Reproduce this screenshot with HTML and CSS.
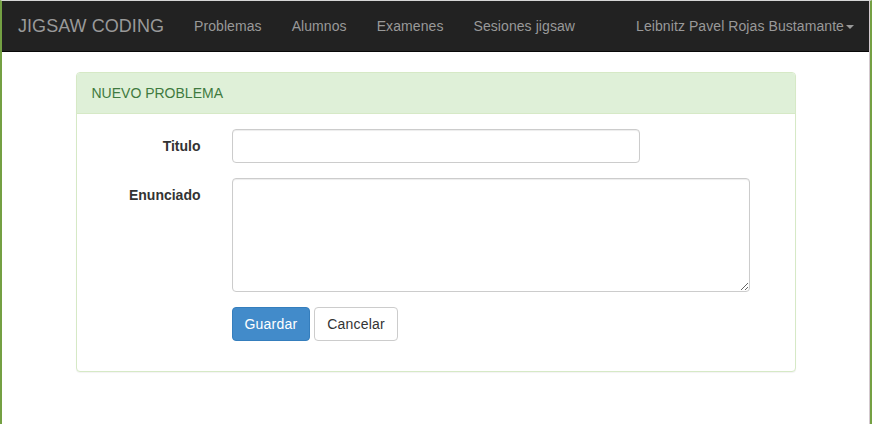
FILE: index.html
```html
<!DOCTYPE html>
<html lang="es">
<head>
<meta charset="utf-8">
<title>Nuevo problema</title>
<link rel="stylesheet" href="styles.css">
</head>
<body>
<div class="frame">
  <nav class="navbar">
    <a class="brand" href="#">JIGSAW CODING</a>
    <ul class="nav">
      <li><a href="#">Problemas</a></li>
      <li><a href="#">Alumnos</a></li>
      <li><a href="#">Examenes</a></li>
      <li><a href="#">Sesiones jigsaw</a></li>
    </ul>
    <ul class="nav nav-right">
      <li><a href="#">Leibnitz Pavel Rojas Bustamante<span class="caret"></span></a></li>
    </ul>
  </nav>
  <main class="main">
    <section class="panel">
      <div class="panel-heading">NUEVO PROBLEMA</div>
      <div class="panel-body">
        <form class="form">
          <label class="label" for="titulo">Titulo</label>
          <div class="field"><input id="titulo" class="input input-short" type="text"></div>
          <label class="label" for="enunciado">Enunciado</label>
          <div class="field"><textarea id="enunciado" class="input textarea" rows="5"></textarea></div>
          <div></div>
          <div class="field actions">
            <button type="button" class="btn btn-primary">Guardar</button>
            <button type="button" class="btn btn-default">Cancelar</button>
          </div>
        </form>
      </div>
    </section>
  </main>
</div>
</body>
</html>
```
FILE: styles.css
```css
* { box-sizing: border-box; }
html, body { margin: 0; padding: 0; }
body {
  font-family: "Liberation Sans", Arial, sans-serif;
  font-size: 14px;
  line-height: 20px;
  color: #333;
  background: #fff;
}
.frame {
  height: 424px;
  border-top: 1px solid #d6d6d6;
  border-left: 2px solid #74a043;
  border-right: 2px solid #74a043;
  box-shadow: inset -1px 0 0 #d3c9cf;
  overflow: hidden;
}
.navbar {
  display: flex;
  align-items: stretch;
  height: 51px;
  margin-right: 1px;
  background: #222;
  border-bottom: 1px solid #080808;
}
.brand {
  padding: 15px 15px 15px 16px;
  font-size: 18px;
  line-height: 20px;
  letter-spacing: 0.05px;
  color: #999;
  text-decoration: none;
}
.nav {
  display: flex;
  list-style: none;
  margin: 0;
  padding: 0;
}
.nav a {
  display: block;
  padding: 15px;
  line-height: 20px;
  letter-spacing: 0.08px;
  color: #999;
  text-decoration: none;
}
.nav-right { margin-left: auto; }
.caret {
  display: inline-block;
  width: 0;
  height: 0;
  margin-left: 2px;
  vertical-align: middle;
  border-top: 4px solid #999;
  border-left: 4px solid transparent;
  border-right: 4px solid transparent;
}
.main {
  display: flex;
  justify-content: center;
  padding-top: 20px;
  padding-right: 1px;
}
.panel {
  width: 720px;
  border: 1px solid #d6e9c6;
  border-radius: 4px;
  background: #fff;
  box-shadow: 0 1px 1px rgba(0,0,0,.05);
}
.panel-heading {
  padding: 10px 15px;
  background: #dff0d8;
  color: #3f7a3f;
  border-bottom: 1px solid #d6e9c6;
  border-radius: 3px 3px 0 0;
}
.panel-body { padding: 15px; }
.form {
  display: grid;
  grid-template-columns: 109px 1fr;
  column-gap: 31px;
  row-gap: 15px;
  padding-bottom: 15px;
}
.label {
  padding-top: 7px;
  text-align: right;
  font-weight: bold;
}
.input {
  display: block;
  height: 34px;
  padding: 6px 12px;
  font-family: inherit;
  font-size: 14px;
  line-height: 20px;
  color: #555;
  background: #fff;
  border: 1px solid #ccc;
  border-radius: 4px;
  box-shadow: inset 0 1px 1px rgba(0,0,0,.075);
  margin: 0;
}
.input-short { width: 408px; }
.textarea {
  width: 518px;
  height: 114px;
  resize: both;
}
.actions { display: flex; gap: 4px; }
.btn {
  height: 34px;
  padding: 6px 12px;
  font-family: inherit;
  font-size: 14px;
  line-height: 20px;
  letter-spacing: 0.2px;
  border: 1px solid transparent;
  border-radius: 4px;
  cursor: pointer;
}
.btn-primary {
  color: #fff;
  background: #428bca;
  border-color: #357ebd;
}
.btn-default {
  color: #333;
  background: #fff;
  border-color: #ccc;
}
```
